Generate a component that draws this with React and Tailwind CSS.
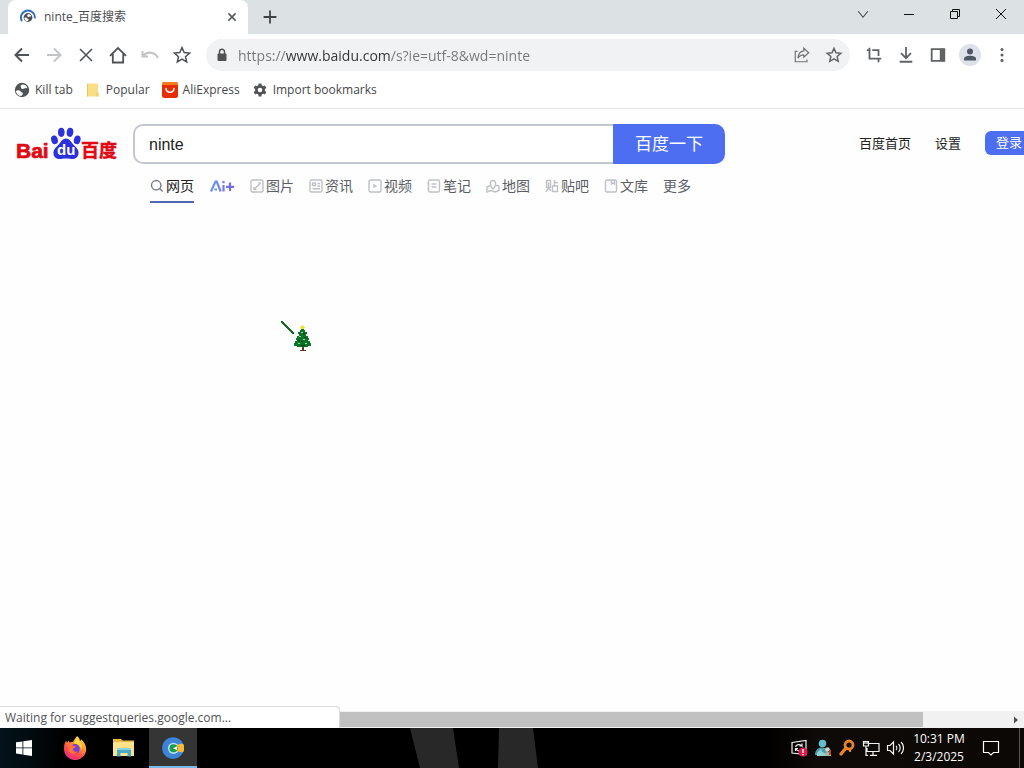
import React from "react";

const ui = "font-['Open_Sans','Noto_Sans_CJK_SC',sans-serif]";
const cjk = "font-['Liberation_Sans','Noto_Sans_CJK_SC',sans-serif]";

function Icon({ children, className = "size-5 text-[#505356]", width = 2 }) {
  return (
    <svg viewBox="0 0 20 20" className={className} fill="none" stroke="currentColor" strokeWidth={width} aria-hidden="true">
      {children}
    </svg>
  );
}

function ToolButton({ label, children }) {
  return (
    <button type="button" aria-label={label} className="flex size-8 shrink-0 items-center justify-center">
      {children}
    </button>
  );
}

const star = <path d="M10 2.6 12.2 7.6 17.6 8.1 13.5 11.7 14.7 17 10 14.2 5.3 17 6.5 11.7 2.4 8.1 7.8 7.6Z" />;

function Globe({ className = "size-4" }) {
  return (
    <svg viewBox="0 0 16 16" className={className} aria-hidden="true">
      <circle cx="8" cy="8" r="7.200" fill="#505356" />
      <path d="M1.800 9c2-1.400 4.200-.8 4.800.6.500 1.200 2.200.5 2.300 1.900.1 1-1 1.300-1.400 2.600-2.800 0-5.200-2-5.700-5.100Z" fill="#fff" />
      <path d="M7 3.200c1.800-1.500 5-.6 6.300 2.300-.9 1-2.100.4-3.200 1.100-1 .8-3 .5-2.900-.7 0-1-1.300-1.700-.2-2.700Z" fill="#fff" />
    </svg>
  );
}

function TabStrip() {
  return (
    <div className="flex h-[34px] items-stretch bg-[#dce2e4]">
      <div className="ml-2 flex w-60 items-center rounded-t-lg bg-white pr-[10px] pl-3">
        <svg viewBox="0 0 16 16" className="size-4 shrink-0" aria-hidden="true">
          <circle cx="8" cy="8.500" r="4.400" fill="#505356" />
          <path d="M4.300 9c1.400-.8 2.700-.3 3 .6.300.7 1.300.3 1.300 1.200 0 .6-.6.800-.8 1.500-1.800 0-3.300-1.300-3.500-3.300ZM7.500 5.600c1.200-.8 3-.3 3.800 1.400-.6.600-1.300.2-2 .7-.6.500-1.800.3-1.700-.4 0-.6-.8-1-.1-1.700Z" fill="#fff" />
          <path d="M2 12.300A7 7 0 1 1 14.900 9.300" fill="none" stroke="#2f6fc0" strokeWidth="1.900" />
        </svg>
        <span className="ml-2 flex-1 truncate text-xs text-[#4a4d50]">ninte_百度搜索</span>
        <button type="button" aria-label="Close tab" className="flex size-3 items-center justify-center">
          <Icon className="size-3 text-[#55585b]" width={2.600}><path d="m4 4 12 12M16 4 4 16" /></Icon>
        </button>
      </div>
      <button type="button" aria-label="New tab" className="ml-2 flex w-7 items-center justify-center">
        <Icon className="size-4 text-[#404346]" width={2.200}><path d="M10 2v16M2 10h16" /></Icon>
      </button>
      <div className="ml-auto flex h-7">
        <button type="button" aria-label="Search tabs" className="flex w-[46px] items-center justify-center">
          <Icon className="size-4 text-[#404346]" width={1.300}><path d="m4 6.500 6 7.500 6-7.500" /></Icon>
        </button>
        <button type="button" aria-label="Minimize" className="flex w-[46px] items-center justify-center">
          <svg viewBox="0 0 12 12" className="size-3" aria-hidden="true"><path d="M1 6.500h10" stroke="#111" /></svg>
        </button>
        <button type="button" aria-label="Restore" className="flex w-[46px] items-center justify-center">
          <svg viewBox="0 0 12 12" className="size-3" fill="none" stroke="#111" aria-hidden="true"><path d="M1.500 3.500h7v7h-7zM3.500 3V1.500h7v7H9" /></svg>
        </button>
        <button type="button" aria-label="Close" className="flex w-[46px] items-center justify-center">
          <svg viewBox="0 0 12 12" className="size-3" fill="none" stroke="#111" aria-hidden="true"><path d="m1 1 10 10M11 1 1 11" /></svg>
        </button>
      </div>
    </div>
  );
}

function Toolbar() {
  return (
    <div className="flex h-[42px] items-center px-[6px]">
      <ToolButton label="Back"><Icon><path d="M17 10H4M10 3.500 3.500 10l6.500 6.500" /></Icon></ToolButton>
      <ToolButton label="Forward"><Icon className="size-5 text-[#c2c4c6]"><path d="M3 10h13M10 3.500l6.500 6.500-6.500 6.500" /></Icon></ToolButton>
      <ToolButton label="Stop"><Icon width={1.600}><path d="m4 4 12 12M16 4 4 16" /></Icon></ToolButton>
      <ToolButton label="Home"><Icon width={1.800}><path d="M2 10.800 10 3l8 7.800M4.800 9v8.500h10.400V9" /></Icon></ToolButton>
      <ToolButton label="Undo"><Icon className="size-5 text-[#c2c4c6]"><path d="M2.500 6v5.500H8M3 11C7 6 15 6.500 18 13" /></Icon></ToolButton>
      <ToolButton label="Favorites"><Icon width={1.500}>{star}</Icon></ToolButton>
      <div className="mx-2 flex h-8 flex-1 items-center rounded-full bg-[#f1f2f3] pl-2">
        <svg viewBox="0 0 16 16" className="size-4 shrink-0" aria-hidden="true">
          <rect x="3.500" y="6.500" width="9" height="7.500" rx="1" fill="#505356" />
          <path d="M5.500 7V4.800a2.500 2.500 0 0 1 5 0V7" fill="none" stroke="#505356" strokeWidth="1.500" />
        </svg>
        <input
          aria-label="Address"
          defaultValue="https://www.baidu.com/s?ie=utf-8&wd=ninte"
          className="ml-2 h-8 min-w-0 flex-1 bg-[linear-gradient(90deg,#74777a_47px,#303336_47px,#303336_152px,#74777a_152px)] bg-clip-text text-sm text-transparent outline-none"
        />
        <ToolButton label="Share">
          <Icon className="size-[18px] text-[#707376]" width={1.300}><path d="M5 6H2.500v11.500h13V15M12 2.500l5.500 5-5.500 5V9.800C9 9.800 7 11 5.500 13.500c.3-4 2.500-7.500 6.500-8Z" /></Icon>
        </ToolButton>
        <ToolButton label="Bookmark this page"><Icon className="size-[18px] text-[#606366]" width={1.600}>{star}</Icon></ToolButton>
      </div>
      <ToolButton label="Capture"><Icon className="size-[18px] text-[#606366]"><path d="M5 2v12h13M2 4.500h3M8 4.500h7V11M15 14v4" /></Icon></ToolButton>
      <ToolButton label="Downloads"><Icon className="size-[18px] text-[#606366]"><path d="M10 1v12M4.500 8l5.500 5.500L15.500 8M3 17.500h14" /></Icon></ToolButton>
      <ToolButton label="Side panel"><Icon className="size-[18px] text-[#606366]"><path d="M3 3.500h14v13H3z" /><path d="M12 3h5v14h-5z" fill="currentColor" stroke="none" /></Icon></ToolButton>
      <ToolButton label="Profile">
        <svg viewBox="0 0 22 22" className="size-[22px]" aria-hidden="true">
          <circle cx="11" cy="11" r="11" fill="#dde1ea" /><circle cx="11" cy="7.500" r="3" fill="#505764" /><path d="M5 16.500v-1.700c0-2.200 3.700-3 6-3s6 .8 6 3v1.700Z" fill="#505764" />
        </svg>
      </ToolButton>
      <ToolButton label="Menu"><Icon className="size-[18px] text-[#606366]"><g fill="currentColor" stroke="none"><circle cx="10" cy="4" r="1.700" /><circle cx="10" cy="10" r="1.700" /><circle cx="10" cy="16" r="1.700" /></g></Icon></ToolButton>
    </div>
  );
}

const bookmarks = [
  { label: "Kill tab", icon: <Globe /> },
  {
    label: "Popular",
    icon: <svg viewBox="0 0 16 16" className="size-4" aria-hidden="true"><path d="M2 1.500h11V10l1 1v3.500H2z" fill="#f8df86" /><path d="M12 10.500V14.500M2.500 14.500V2" stroke="#e9c65d" fill="none" /></svg>,
  },
  {
    label: "AliExpress",
    icon: <svg viewBox="0 0 16 16" className="size-4" aria-hidden="true"><rect width="16" height="16" rx="2.500" fill="#e62e04" /><path d="M0 3V2.500A2.500 2.500 0 0 1 2.500 0h11A2.500 2.500 0 0 1 16 2.500V3Z" fill="#f47a1c" /><path d="M4 6.500c.3 5 7.700 5 8 0" fill="none" stroke="#fff" strokeWidth="1.500" strokeLinecap="round" /></svg>,
  },
  {
    label: "Import bookmarks",
    icon: <svg viewBox="0 0 16 16" className="size-4" aria-hidden="true"><circle cx="8" cy="8" r="3.600" fill="none" stroke="#505356" strokeWidth="2.600" /><g stroke="#505356" strokeWidth="3"><path d="M8 1.500v2.500M8 12v2.500M2.400 4.700l2.300 1.400M11.300 9.900l2.300 1.400M2.400 11.300l2.300-1.400M11.300 6.100l2.300-1.400" /></g></svg>,
  },
];

function Bookmarks() {
  return (
    <nav aria-label="Bookmarks" className="flex h-[33px] items-center gap-3 border-b border-[#e4e6e7] px-[14px] pb-1">
      {bookmarks.map((b) => (
        <a key={b.label} href="#" className="flex items-center gap-[5px] text-xs text-[#45484b]">{b.icon}{b.label}</a>
      ))}
    </nav>
  );
}

function BaiduLogo() {
  return (
    <svg viewBox="0 0 104 34" className="h-[34px] w-[104px]" role="img" aria-label="Baidu">
      <g className="font-['Liberation_Sans','Noto_Sans_CJK_SC',sans-serif] font-bold" fill="#e10a14" stroke="#e10a14">
        <text x="2" y="31" fontSize="21" strokeWidth=".7">Bai</text>
        <text x="67" y="30" fontSize="18" strokeWidth=".5">百度</text>
      </g>
      <g fill="#2b32dc">
        <ellipse cx="40.500" cy="12.800" rx="3.300" ry="4.400" transform="rotate(-15 40.500 12.800)" />
        <ellipse cx="47.300" cy="5.300" rx="3.300" ry="4.600" />
        <ellipse cx="56" cy="5.300" rx="3.300" ry="4.600" transform="rotate(8 56 5.300)" />
        <ellipse cx="63.200" cy="12.800" rx="3.300" ry="4.400" transform="rotate(15 63.200 12.800)" />
        <path d="M52 11.500c4 0 5.500 4.300 8 6.800 3 2.500 5 5 4.500 8.500-.6 4.500-4.500 5.800-8.500 5-2.500-.4-5.500-.4-8 0-4 .8-8-.3-8.500-5-.4-3.500 1.800-6 4.500-8.500 2.500-2.500 4-6.800 8-6.800Z" />
      </g>
      <text x="43" y="28" fontSize="15" fill="#fff" className="font-['Liberation_Sans',sans-serif] font-bold">du</text>
    </svg>
  );
}

const frame = <rect x="1" y="1" width="12" height="12" rx="1.500" />;
const tabs = [
  { label: "图片", d: <>{frame}<path d="m4 10.500 3-3M7 7.500l3-3M4 8v2.500h2.500M8.500 4H10v1.500" /></> },
  { label: "资讯", d: <>{frame}<path d="M3.500 4h3v2.500h-3zM8.500 4.500H11M8.500 7H11M3.500 9.800H11" /></> },
  { label: "视频", d: <>{frame}<path d="M6 6v2l1.800-1z" fill="currentColor" /></> },
  { label: "笔记", d: <><rect x="1.500" y="1" width="11" height="12" rx="1.500" /><path d="M4.500 5h5M4.500 8h5M1 4v1M1 9v1" /></> },
  { label: "地图", d: <><path d="M4 6.500 1 8v5l4-1.500L9 13l4-1.500V7l-3-.7" /><path d="M7 10C3 6.500 4 1.500 7 1.500S11 6.500 7 10Z" /></> },
  { label: "贴吧", d: <path d="M1.500 1.500h4v7h-4zM3.500 3.500v5L1 13M4 9.500 6 12M9.500 1v6M9.500 3.500H13M7.500 7h5v5.500h-5z" /> },
  { label: "文库", d: <><rect x="1.500" y="1" width="11" height="12" rx="1.500" /><path d="M7.500 1.500V5l1.500-1 1.500 1V1.500" /></> },
];

function Page() {
  return (
    <main className={`flex-1 overflow-hidden bg-[#fefefe] ${cjk}`}>
      <div className="flex min-w-[1033px] items-start pt-[15px] pl-[14px]">
        <a href="#" className="mt-[3px] shrink-0"><BaiduLogo /></a>
        <div className="ml-[15px]">
          <form className="flex" onSubmit={(e) => e.preventDefault()}>
            <input aria-label="搜索" defaultValue="ninte" className="h-10 w-[480px] rounded-l-[10px] border-2 border-r-0 border-[#c4c7ce] bg-white px-[14px] pt-[2px] text-base text-[#222] outline-none" />
            <button className="h-10 w-28 rounded-r-[10px] bg-[#4e6ef2] pt-[2px] text-[17px] text-white">百度一下</button>
          </form>
          <nav className="ml-[17px] flex h-[39px] gap-[15px] pt-3 text-sm leading-5 text-[#5c5e66]">
            <a href="#" className="flex items-start gap-[2px] border-b-2 border-[#5068b4] text-[#222]">
              <svg viewBox="0 0 14 14" className="mt-[3px] size-[14px]" fill="none" stroke="#777b87" strokeWidth="1.400" aria-hidden="true"><circle cx="6.200" cy="6.200" r="4.700" /><path d="m9.600 9.600 3 3" /></svg>
              网页
            </a>
            <a href="#" aria-label="Ai+" className="pt-[3px]">
              <svg viewBox="0 0 26 14" className="h-[14px] w-[26px]" fill="none" strokeWidth="2.200" aria-hidden="true">
                <defs><linearGradient id="ai" x1="0" y1="0" x2="26" y2="0" gradientUnits="userSpaceOnUse"><stop stopColor="#6a9cf2" /><stop offset="1" stopColor="#7b61df" /></linearGradient></defs>
                <path d="M2 12.500 6.500 2.500h1.200l4 10M5.500 10.500H8M14.500 6v6.500M14.500 2v2.200M21 3.500v8.500M17 7.800h8" stroke="url(#ai)" />
              </svg>
            </a>
            {tabs.map((t) => (
              <a key={t.label} href="#" className="flex items-start gap-[2px]">
                <svg viewBox="0 0 14 14" className="mt-[3px] size-[14px] text-[#bfc1c6]" fill="none" stroke="currentColor" strokeWidth="1.400" aria-hidden="true">{t.d}</svg>
                {t.label}
              </a>
            ))}
            <a href="#">更多</a>
          </nav>
        </div>
        <div className="ml-auto flex items-start gap-6 pt-[7px] text-[13px] leading-6 text-[#222]">
          <a href="#" className="pt-px">百度首页</a>
          <a href="#" className="pt-px">设置</a>
          <button type="button" className="h-6 w-12 rounded-md bg-[#4e6ef2] text-white">登录</button>
        </div>
      </div>
    </main>
  );
}

function TreeCursor() {
  return (
    <svg viewBox="0 0 32 32" className="pointer-events-none absolute top-[321px] left-[281px] size-8" shapeRendering="crispEdges" aria-hidden="true">
      <path d="m0 0 13 13" stroke="#176b22" strokeWidth="2.500" />
      <path d="M20 7h3v2h1v2h2v2h-1v2h2v2h1v2h-1v1h2v2h1v3h-3v1H16v-1h-3v-3h1v-2h2v-1h-1v-2h1v-2h2v-2h-1v-2h2V9h1z" fill="#0c7427" />
      <path d="M20 11h2v1h-2zM18 15h2v1h-2zM22 18h2v1h-2zM17 22h2v1h-2zM24 22h2v1h-2z" fill="#8be09b" />
      <path d="M22 12h2v1h-2zM20 20h2v1h-2zM17 19h2v1h-2zM23 16h2v1h-2zM20 24h4v1h-4z" fill="#063c14" />
      <path d="M21 26h2v3h2v1h-6v-1h2z" fill="#553b22" />
      <path d="M21 4h1v1h1v1h1v1h-1v1h-3V7h-1V6h1V5h1z" fill="#f2e22c" />
    </svg>
  );
}

function TaskButton({ label, active, children }) {
  return (
    <button type="button" aria-label={label} className={`flex w-12 items-center justify-center ${active ? "border-b-2 border-[#76b9ed] bg-[#353535] pt-[2px]" : ""}`}>
      {children}
    </button>
  );
}

function TrayButton({ label, children }) {
  return (
    <button type="button" aria-label={label} className="flex w-6 items-center justify-center">
      <svg viewBox="0 0 18 18" className="size-[18px]" fill="none" stroke="#f2f2f2" strokeWidth="1.200" aria-hidden="true">{children}</svg>
    </button>
  );
}

function Taskbar() {
  return (
    <footer className="relative flex h-10 bg-black text-white">
      <svg viewBox="0 0 1024 40" preserveAspectRatio="none" className="absolute inset-0 h-full w-full" aria-hidden="true">
        <defs>
          <linearGradient id="glow"><stop stopColor="#03131c" /><stop offset="1" stopColor="#000" /></linearGradient>
          <linearGradient id="warm"><stop stopColor="#000" /><stop offset=".2" stopColor="#0e0a08" /><stop offset="1" stopColor="#0b0806" /></linearGradient>
        </defs>
        <path d="M0 0h66l-14 40H0z" fill="url(#glow)" />
        <path d="M410 0h43l6 40h-39zM499 0h34l5 40h-40z" fill="#282828" />
        <path d="M766 0h258v40H766z" fill="url(#warm)" />
      </svg>
      <div className="relative flex gap-px">
        <TaskButton label="Start">
          <svg viewBox="0 0 16 16" className="size-4" fill="#fff" aria-hidden="true"><path d="M0 2.300 6.500 1.400v6.100H0zM7.300 1.300 16 0v7.500H7.300zM0 8.300h6.500v6.200L0 13.600zM7.300 8.300H16V16l-8.700-1.300z" /></svg>
        </TaskButton>
        <div className="w-px" />
        <TaskButton label="Firefox">
          <svg viewBox="0 0 24 24" className="size-6" aria-hidden="true">
            <defs><linearGradient id="fox" x1=".8" y1="0" x2=".2" y2="1"><stop stopColor="#ffe44d" /><stop offset=".35" stopColor="#ff9630" /><stop offset=".65" stopColor="#ff4b4b" /><stop offset="1" stopColor="#e5248c" /></linearGradient></defs>
            <path d="M14 0c2 1.500 2.800 3 3 5l1.500-1.500C21 6 23.200 9 23.200 13A11 11 0 0 1 1 13C1 9.500 1.500 7 3 4.800l1 2L5.500 4.500l1 2C8 5.800 9 6 10 6c1-2.500 2.500-3.800 4-6Z" fill="url(#fox)" />
            <circle cx="12" cy="12.800" r="4.800" fill="#7542d7" />
            <path d="M4.500 8.500c3-.6 4.500.5 6 1.500l2.500.6c-.5 1.500-2.500 1.300-3 2.400-.5 2 2.200 3.500 4.500 2.500-2 3.800-9 2.800-9.500-2Z" fill="#ff7139" />
            <path d="M14 1c-1 3-3 5-2.500 7 3-1 6 2 7 6C20 9 17 6 14 1Z" fill="#ffd83f" />
          </svg>
        </TaskButton>
        <TaskButton label="File Explorer">
          <svg viewBox="0 0 22 20" className="h-5 w-[22px]" aria-hidden="true"><path d="M0 1h8l1.500 1.500H21V18H0z" fill="#e9b84a" /><path d="M1 4h20v14H0V5z" fill="#ffe28a" /><path d="M4 10h14v8.500h-3.500V15h-7v3.500H4z" fill="#4aa9c9" /><path d="M4 10h14v2H4z" fill="#8bd0df" /></svg>
        </TaskButton>
        <TaskButton label="Browser" active>
          <svg viewBox="0 0 22 22" className="size-[22px]" aria-hidden="true">
            <circle cx="11" cy="11" r="10.800" fill="#3d83d6" />
            <circle cx="11.500" cy="11.300" r="5.600" fill="#b9e0f4" />
            <path d="m14.500 8 5-1.500 2 .8a10.800 10.800 0 0 1 0 7.400l-2 .8-5-1.500Z" fill="#f6b73c" />
            <circle cx="11.500" cy="11.300" r="4" fill="#1e9a4b" />
            <path d="m11 11.300 4-2v4z" fill="#e8f3ec" />
          </svg>
        </TaskButton>
      </div>
      <div className="relative ml-auto flex">
        <TrayButton label="Updates"><path d="M2 3.500 16 1.500v14L2 14z" /><path d="M5.500 8C6 5.500 10 4.500 12 7V4.500M12 7H9.500M5.500 12V9.500H8M6 10c1 2 3 2 4.500 1.500" /><circle cx="13" cy="13" r="4.500" fill="#e01b4c" stroke="none" /><path d="M13 10v4M13 15v1.200" strokeWidth="1.500" /></TrayButton>
        <TrayButton label="Users"><g stroke="none"><circle cx="8.500" cy="4.500" r="3.800" fill="#63bcc8" /><path d="M1 16c0-5 3-7.500 7-7.500s6 2.500 6 7.500Z" fill="#4e9cab" /><path d="m3 14 4-4 1 3 5 2v2H3z" fill="#8ed0d4" /><circle cx="13.500" cy="10.500" r="2.300" fill="#cdd8c8" /><path d="M11 17c0-3 1-4 3-4s3 1 3 4Z" fill="#aab6a0" /><path d="m15 12 2-2v6h-2z" fill="#bd4437" /></g></TrayButton>
        <TrayButton label="Key"><g stroke="#e8842a"><circle cx="11" cy="6" r="4" strokeWidth="2.800" /><path d="m8 9-5 6" strokeWidth="3.400" strokeLinecap="round" /><path d="M12 10v3" strokeWidth="2" /></g></TrayButton>
        <TrayButton label="Network"><path d="M7 4.500h10v8H5V9M11 12.500V16M8 16.300h7M1.500 2.500h5V7h-5zM4 7v9.300h2M3 2.500V5M5 2.500V5" /></TrayButton>
        <TrayButton label="Volume"><path d="M1.500 6.500H4L7.500 3v12L4 11.500H1.500zM10 7c1 1 1 3 0 4M12.500 5c2.200 2 2.200 6 0 8M15 3c3.300 3 3.300 9 0 12" /></TrayButton>
        <button type="button" className="w-16 text-center text-xs leading-[18px]">
          <time dateTime="2025-02-03T22:31">10:31 PM<br />2/3/2025</time>
        </button>
        <button type="button" aria-label="Notifications" className="flex w-10 items-center justify-center">
          <svg viewBox="0 0 18 18" className="size-[18px]" fill="none" stroke="#fff" strokeWidth="1.200" aria-hidden="true"><path d="M1.500 2.500h15v11h-5L9 16l-2.500-2.500h-5z" /></svg>
        </button>
        <button type="button" aria-label="Show desktop" className="ml-2 w-[5px] border-l border-[#555]" />
      </div>
    </footer>
  );
}

export default function App() {
  return (
    <div className={`relative flex min-h-screen flex-col overflow-hidden bg-white ${ui}`}>
      <header>
        <TabStrip />
        <Toolbar />
        <Bookmarks />
      </header>
      <Page />
      <div className="relative flex h-[17px] bg-[#f1f1f1] py-px pl-[17px]">
        <div className="w-[90%] bg-[#c1c1c1]" />
        <svg viewBox="0 0 16 16" className="ml-auto size-4" aria-hidden="true"><path d="m6 4.500 4 3.500-4 3.500z" fill="#505050" /></svg>
        <div role="status" className="absolute bottom-0 left-0 h-[22px] w-[340px] rounded-tr-sm border-t border-r border-[#d8dadc] bg-white pl-[5px] text-xs leading-[22px] text-[#505356]">
          Waiting for suggestqueries.google.com...
        </div>
      </div>
      <Taskbar />
      <TreeCursor />
    </div>
  );
}
